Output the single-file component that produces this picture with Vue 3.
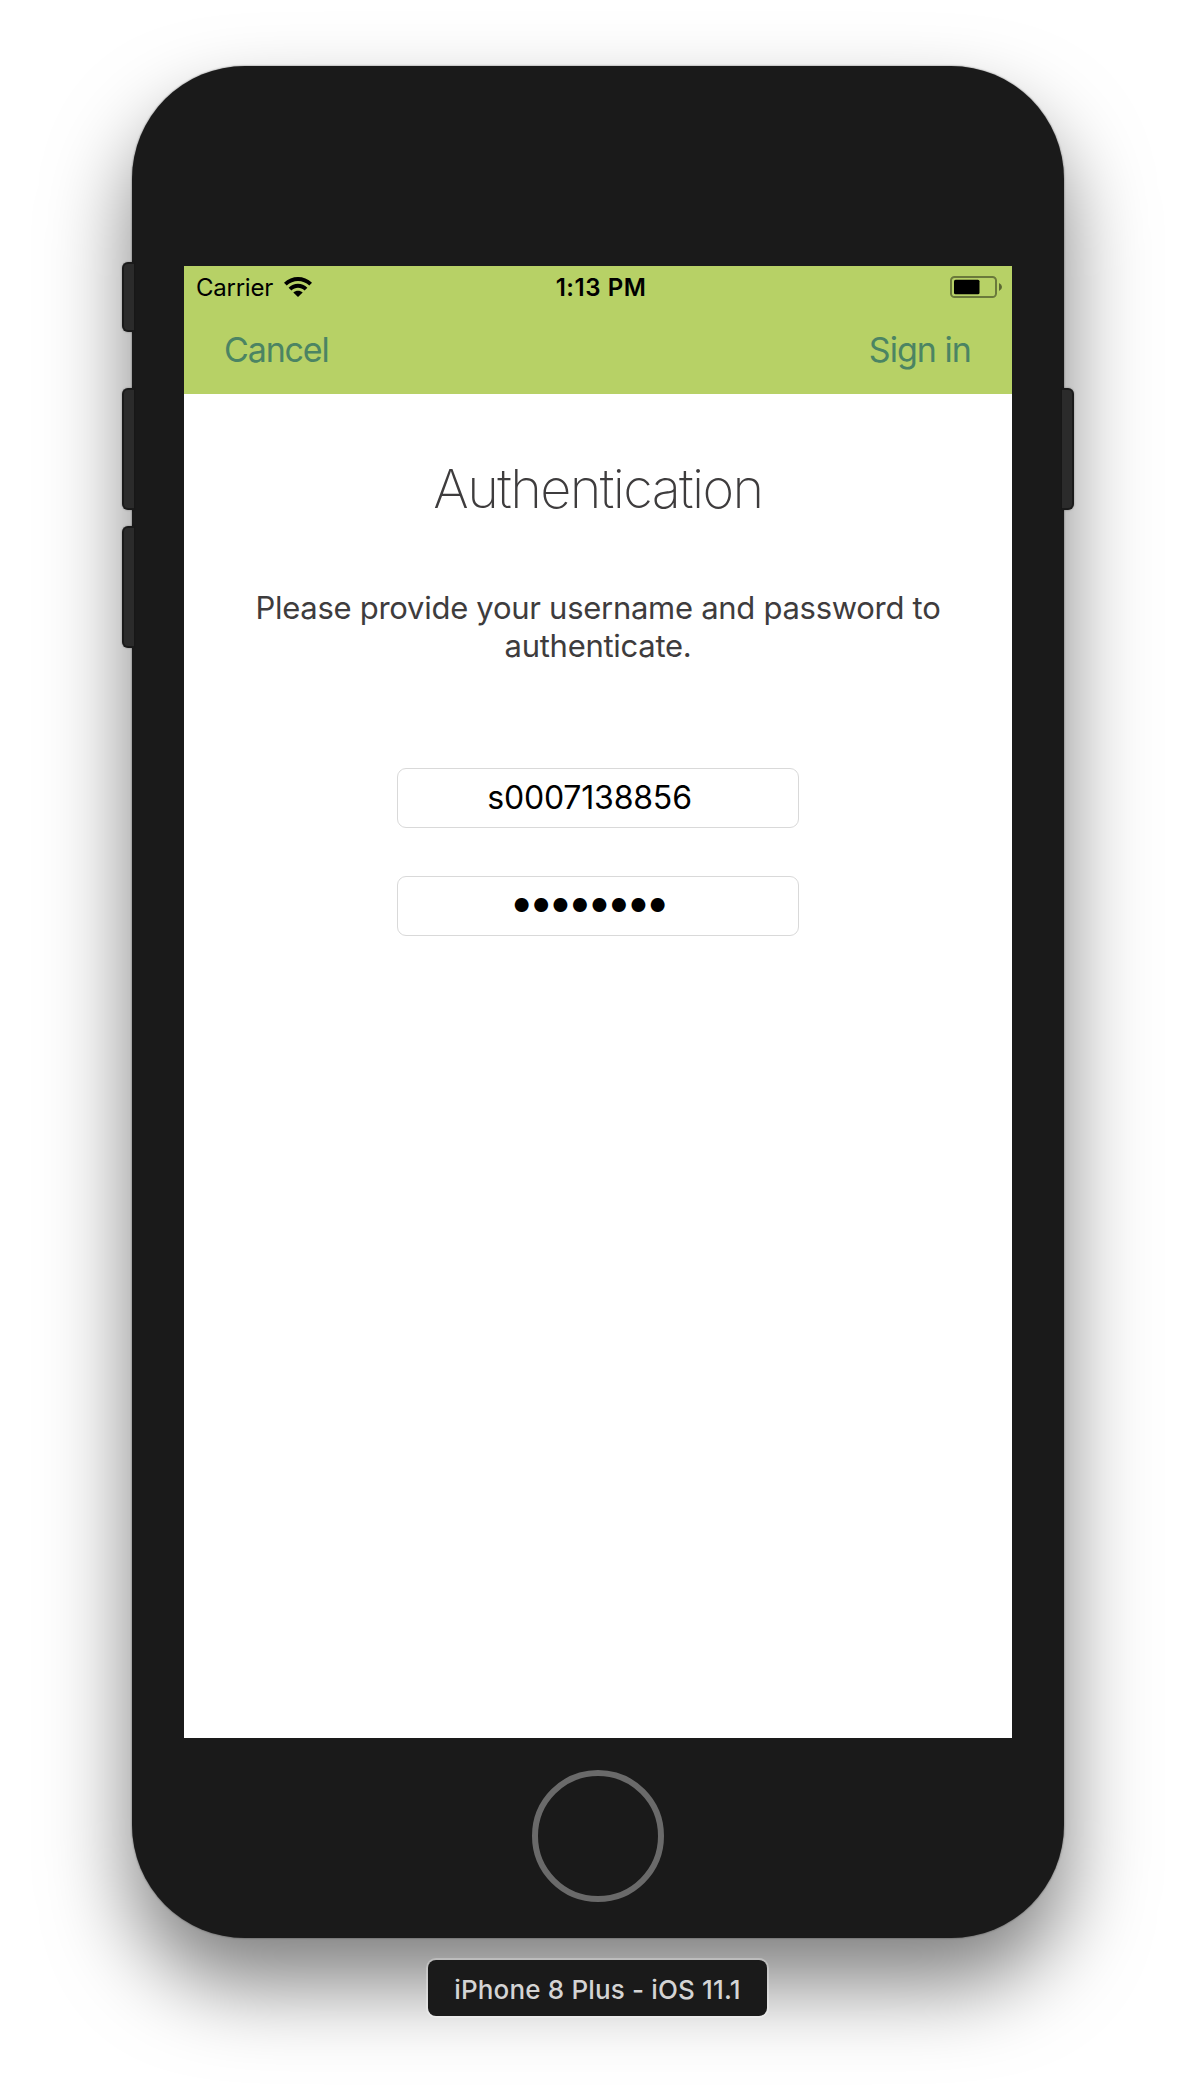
<script setup>
const username = 's0007138856'
const password = '●'.repeat(8)
</script>

<template>
  <div class="stage">
    <div class="phone">
      <i class="key mute"></i>
      <i class="key up"></i>
      <i class="key down"></i>
      <i class="key power"></i>
      <main class="screen">
        <header class="top">
          <div class="status">
            <div class="carrier">
              <span>Carrier</span>
              <svg class="wifi" width="28" height="20" viewBox="0 0 28 20">
                <path d="M0 5.7C7.8-1.9 20.2-1.9 28 5.7L25.3 8.6C19 2.6 9 2.6 2.7 8.6Z" />
                <path d="M4.6 10.7C9.9 5.4 18.1 5.4 23.4 10.7L20.6 13.5C16.8 9.9 11.2 9.9 7.4 13.5Z" />
                <path d="M9.3 15.5C12 13 16 13 18.7 15.5L14 20Z" />
              </svg>
            </div>
            <div class="time">1:13 PM</div>
            <div class="power-state">
              <svg width="54" height="22" viewBox="0 0 54 22">
                <rect x="1" y="1" width="45" height="20" rx="3.6" fill="none" stroke="#000" stroke-opacity=".42" stroke-width="2" />
                <rect x="4" y="3.7" width="25.5" height="14.6" rx="1.6" />
                <path d="M49 7Q52 8.3 52 11T49 15Z" fill-opacity=".5" />
              </svg>
            </div>
          </div>
          <nav class="nav">
            <a class="cancel">Cancel</a>
            <a class="signin">Sign in</a>
          </nav>
        </header>
        <section class="content">
          <h1>Authentication</h1>
          <p>Please provide your username and password to<br />authenticate.</p>
          <div class="field">{{ username }}</div>
          <div class="field secret"><span>{{ password }}</span></div>
        </section>
      </main>
      <div class="home"></div>
    </div>
    <div class="caption">iPhone 8 Plus - iOS 11.1</div>
  </div>
</template>

<style>
body { margin: 0; background: #fff; }
</style>

<style scoped>
.stage {
  box-sizing: border-box;
  width: 1196px;
  height: 2100px;
  padding-top: 66px;
  overflow: hidden;
  display: flex;
  flex-direction: column;
  align-items: center;
  background: #fff;
  font-family: Inter, "Liberation Sans", sans-serif;
}
.phone {
  position: relative;
  box-sizing: border-box;
  flex: none;
  width: 932px;
  height: 1872px;
  padding-top: 200px;
  border-radius: 113px;
  background: #1a1a1a;
  display: flex;
  flex-direction: column;
  align-items: center;
  box-shadow: 0 0 2px rgba(0, 0, 0, .55), 0 46px 84px rgba(0, 0, 0, .5);
}
.key {
  position: absolute;
  box-sizing: border-box;
  left: -10px;
  width: 12px;
  height: 122px;
  background: #2b2b2b;
  border: 2px solid #1a1a1a;
  border-right: 0;
  border-radius: 6px 0 0 6px;
  box-shadow: 0 0 2px rgba(0, 0, 0, .35);
}
.mute { top: 196px; height: 70px; }
.up { top: 322px; }
.down { top: 460px; }
.power {
  top: 322px;
  left: auto;
  right: -10px;
  border: 2px solid #1a1a1a;
  border-left: 0;
  border-radius: 0 6px 6px 0;
}
.screen {
  flex: none;
  width: 828px;
  height: 1472px;
  background: #fff;
}
.top {
  height: 128px;
  background: #b7d166;
}
.status {
  display: grid;
  grid-template-columns: 1fr auto 1fr;
  align-items: center;
  height: 42px;
  padding: 0 8px 0 12px;
  font-size: 24px;
  line-height: 43px;
  color: #000;
}
.carrier {
  display: flex;
  align-items: center;
  gap: 11px;
  letter-spacing: -.25px;
}
.wifi { margin-top: -2px; }
.time {
  font-weight: 600;
  letter-spacing: .55px;
  padding-left: 2px;
}
.power-state {
  display: flex;
  justify-content: flex-end;
  margin-top: -2px;
}
.nav {
  display: flex;
  justify-content: space-between;
  padding: 0 41px 0 40px;
  font-size: 34px;
  line-height: 84px;
  color: #4b8463;
}
.cancel { letter-spacing: -1.15px; }
.signin { letter-spacing: -.95px; }
.content {
  display: flex;
  flex-direction: column;
  align-items: center;
  padding-top: 62px;
}
h1 {
  margin: 0;
  font-size: 54px;
  line-height: 66px;
  font-weight: 150;
  letter-spacing: -1.6px;
  color: #3e3c3d;
}
p {
  margin: 67px 0 103px;
  font-size: 31px;
  line-height: 38px;
  letter-spacing: -.28px;
  text-align: center;
  color: #3e3c3d;
}
.field {
  box-sizing: border-box;
  width: 402px;
  height: 60px;
  padding-right: 17px;
  border: 1px solid #d9d9d9;
  border-radius: 9px;
  font-size: 32px;
  line-height: 57px;
  letter-spacing: -.18px;
  text-align: center;
  color: #000;
}
.secret {
  margin-top: 48px;
  font-size: 18.4px;
  line-height: 57px;
  letter-spacing: 2.63px;
  padding-right: 14px;
}
.home {
  box-sizing: border-box;
  width: 132px;
  height: 132px;
  margin-top: 32px;
  border: 6px solid #6a6a6a;
  border-radius: 50%;
}
.caption {
  position: relative;
  box-sizing: border-box;
  flex: none;
  width: 339px;
  height: 56px;
  margin: 22px 1px 0 0;
  border-radius: 8px;
  background: #1a1a1a;
  box-shadow: 0 0 0 2px rgba(255, 255, 255, .28);
  color: #d4d4d4;
  font-size: 26px;
  font-weight: 500;
  line-height: 59px;
  letter-spacing: .16px;
  text-align: center;
}
</style>
